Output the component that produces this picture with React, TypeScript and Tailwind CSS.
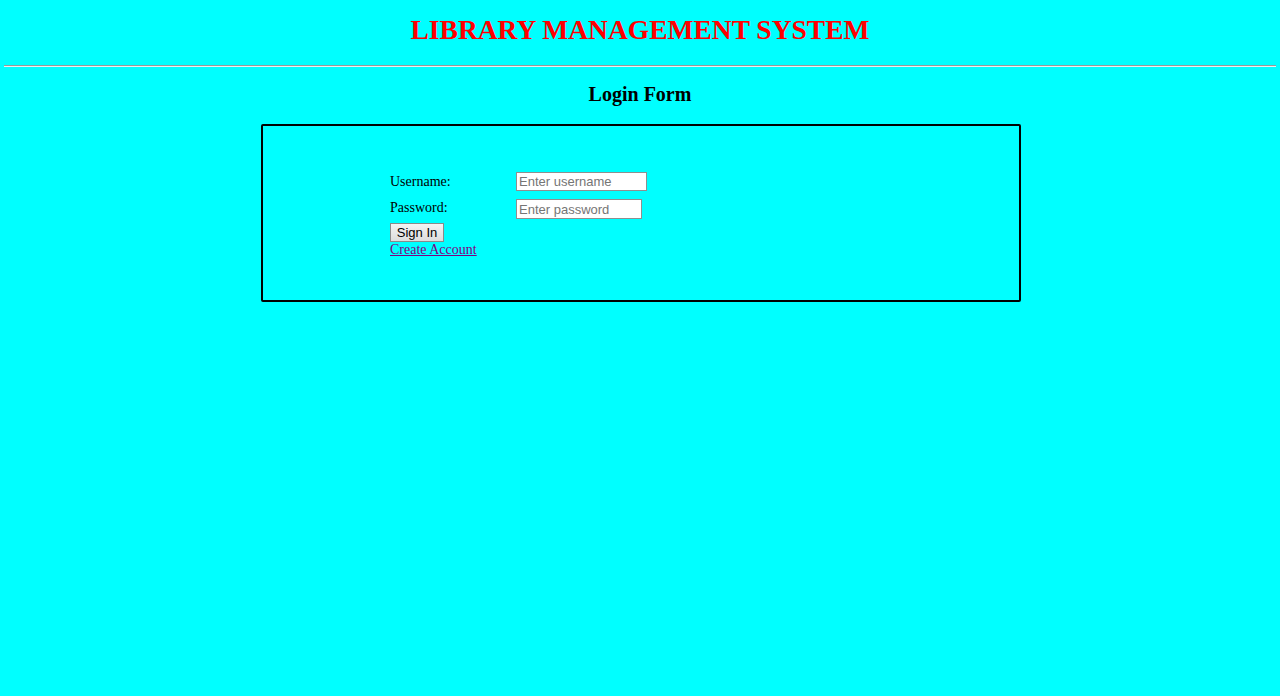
export default function App() {
  return (
    <div className="min-h-[696px] bg-[#00ffff] font-['Liberation_Serif',serif] text-black">
      <div className="pt-[14px] text-center">
        <h1 className="text-[27.5px] leading-[32px] font-bold text-[#ff0000]">LIBRARY MANAGEMENT SYSTEM</h1>
      </div>
      <div className="mx-[4px] mt-[19px] h-[2px] border-t border-t-[#9a9a9a] border-b border-b-[#eeeeee]" />
      <h2 className="mt-[14px] text-center text-[20px] leading-[26px] font-bold">Login Form</h2>
      <div className="pl-[2px]">
        <div className="mx-auto mt-[17px] h-[178px] w-[760px] rounded-[2px] border-2 border-black pl-[127px] pt-[46px]">
          <div className="flex items-start text-[14px] leading-[18px]">
            <span className="w-[126px] pt-[1px]">Username:</span>
            <input
              placeholder="Enter username"
              className="h-[19px] w-[131px] border border-[#8f8f8f] bg-white px-[2px] font-['Liberation_Sans',sans-serif] text-[13px] placeholder:text-[#757575] outline-none"
            />
          </div>
          <div className="mt-[8px] flex items-start text-[14px] leading-[18px]">
            <span className="w-[126px]">Password:</span>
            <input
              type="password"
              placeholder="Enter password"
              className="h-[20px] w-[126px] border border-[#8f8f8f] bg-white px-[2px] font-['Liberation_Sans',sans-serif] text-[13px] placeholder:text-[#757575] outline-none"
            />
          </div>
          <button className="mt-[4px] block h-[19px] w-[54px] border border-[#8a8a8a] bg-gradient-to-b from-[#f4f4f4] to-[#dcdcdc] font-['Liberation_Sans',sans-serif] text-[13px] leading-[17px] text-black">
            Sign In
          </button>
          <a href="#" className="block text-[14px] leading-[16px] text-[#800080] underline">
            Create Account
          </a>
        </div>
      </div>
    </div>
  )
}
